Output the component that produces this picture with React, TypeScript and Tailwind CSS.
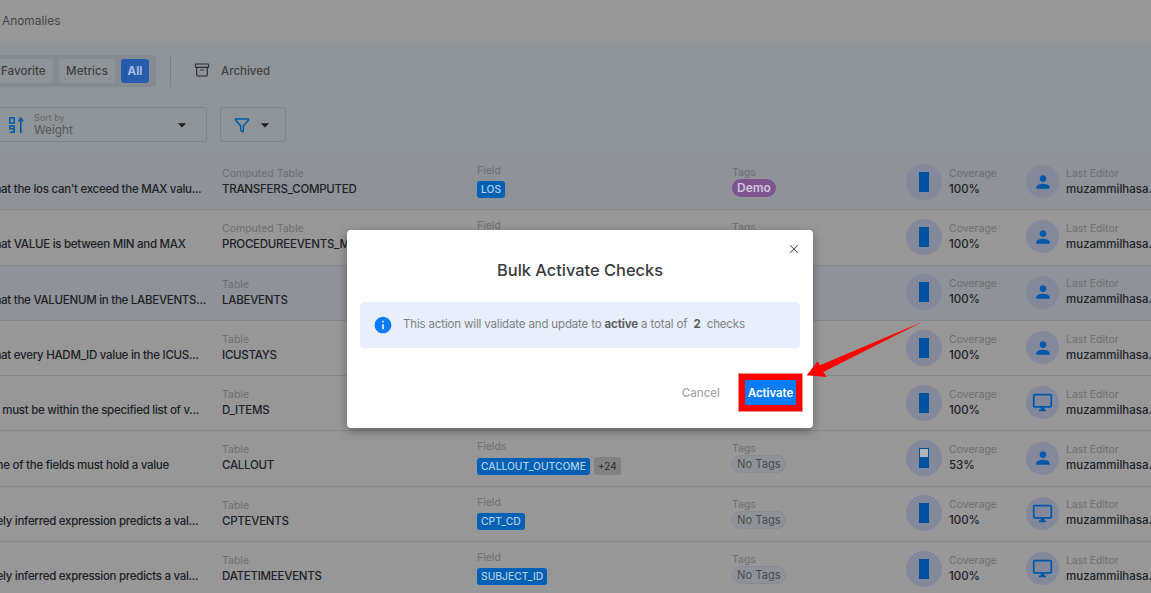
import { Archive, Funnel, X } from 'lucide-react';
import { MdPerson, MdOutlineDesktopWindows, MdInfo, MdArrowDropDown } from 'react-icons/md';

const FONT = "font-['Inter','Noto_Sans',sans-serif]";

type Row = {
  desc: string;
  tableType: string;
  table: string;
  fieldLabel: string;
  field: string;
  extra?: string;
  tag?: string;
  coverage: number;
  editor: 'user' | 'system';
  selected?: boolean;
};

const ROWS: Row[] = [
  { desc: "Asserts that the los can't exceed the MAX valu...", tableType: 'Computed Table', table: 'TRANSFERS_COMPUTED', fieldLabel: 'Field', field: 'LOS', tag: 'Demo', coverage: 100, editor: 'user', selected: true },
  { desc: 'Asserts that VALUE is between MIN and MAX', tableType: 'Computed Table', table: 'PROCEDUREEVENTS_MV', fieldLabel: 'Field', field: 'VALUE', coverage: 100, editor: 'user' },
  { desc: 'Asserts that the VALUENUM in the LABEVENTS...', tableType: 'Table', table: 'LABEVENTS', fieldLabel: 'Field', field: 'VALUENUM', coverage: 100, editor: 'user', selected: true },
  { desc: 'Asserts that every HADM_ID value in the ICUS...', tableType: 'Table', table: 'ICUSTAYS', fieldLabel: 'Field', field: 'HADM_ID', coverage: 100, editor: 'user' },
  { desc: 'The value must be within the specified list of v...', tableType: 'Table', table: 'D_ITEMS', fieldLabel: 'Field', field: 'CATEGORY', coverage: 100, editor: 'system' },
  { desc: 'At least one of the fields must hold a value', tableType: 'Table', table: 'CALLOUT', fieldLabel: 'Fields', field: 'CALLOUT_OUTCOME', extra: '+24', coverage: 53, editor: 'user' },
  { desc: 'Immediately inferred expression predicts a val...', tableType: 'Table', table: 'CPTEVENTS', fieldLabel: 'Field', field: 'CPT_CD', coverage: 100, editor: 'system' },
  { desc: 'Immediately inferred expression predicts a val...', tableType: 'Table', table: 'DATETIMEEVENTS', fieldLabel: 'Field', field: 'SUBJECT_ID', coverage: 100, editor: 'system' },
];

function Label({ children }: { children: string }) {
  return <div className="text-[10.5px] leading-[14px] text-[#6e7074]">{children}</div>;
}

function Value({ children }: { children: string }) {
  return <div className="text-[11.5px] leading-[16px] font-medium text-[#202226] whitespace-nowrap">{children}</div>;
}

function CheckRow({ row }: { row: Row }) {
  return (
    <div className={`h-[55.3px] grid grid-cols-[222px_255px_255px_174px_120px_1fr] border-b border-[#858789] overflow-hidden ${row.selected ? 'bg-[#8f9298]' : 'bg-[#979797]'}`}>
      <div className="overflow-hidden pt-[26px]">
        <div className="ml-[-52px] text-[11.5px] leading-[16px] font-medium tracking-[-0.27px] text-[#202226] whitespace-nowrap">{row.desc}</div>
      </div>
      <div className="pt-[12px]">
        <Label>{row.tableType}</Label>
        <div className="tracking-[-0.25px]"><Value>{row.table}</Value></div>
      </div>
      <div className="pt-[9px]">
        <Label>{row.fieldLabel}</Label>
        <div className="mt-[3px] flex items-center gap-1">
          <span className="h-[17px] px-[4px] rounded-[3px] bg-[#0060b4] text-[#b5cfe8] text-[10.3px] leading-[17px] font-medium">{row.field}</span>
          {row.extra && <span className="h-[18px] px-[4px] rounded-[3px] bg-[#808284] text-[#2d2f33] text-[10px] leading-[18px]">{row.extra}</span>}
        </div>
      </div>
      <div className="pt-[11px]">
        <Label>Tags</Label>
        {row.tag ? (
          <div className="w-fit -mt-[1px] h-[18px] px-[5px] rounded-full bg-[#7d5490] text-[#d2c4da] text-[12px] leading-[18px] font-semibold">{row.tag}</div>
        ) : (
          <div className="w-fit -mt-[1px] h-[18px] px-[4px] rounded-full bg-[#8f9298] border border-[#898c92] text-[#4a4c50] text-[11.2px] leading-[16px]">No Tags</div>
        )}
      </div>
      <div className="flex items-center gap-[7px] -mt-[1px]">
        <div className="w-9 h-9 rounded-full bg-[#83899a] flex items-center justify-center">
          <div className="w-[10px] h-5 bg-[#00529f] p-[1px]">
            {row.coverage < 100 && <div className="w-2 h-2 bg-[#b3b5b9]" />}
          </div>
        </div>
        <div>
          <Label>Coverage</Label>
          <Value>{`${row.coverage}%`}</Value>
        </div>
      </div>
      <div className="flex items-center gap-[7px] -mt-[1px] overflow-hidden">
        <div className="w-[33px] h-[33px] shrink-0 rounded-full bg-[#83899a] flex items-center justify-center text-[#0058a8]">
          {row.editor === 'user' ? <MdPerson size={20} /> : <MdOutlineDesktopWindows size={21} />}
        </div>
        <div>
          <Label>Last Editor</Label>
          <Value>muzammilhasa...</Value>
        </div>
      </div>
    </div>
  );
}

export default function App() {
  return (
    <div className={`relative w-[1151px] h-[593px] overflow-hidden bg-[#979797] ${FONT}`}>
      <div className="h-[41px] flex items-center pl-[2px] text-[11.9px] text-[#45474b]">Anomalies</div>

      <div className="h-[114px] bg-[#8f9498] border-b border-[#8c9094]">
        <div className="flex items-center pt-[14px] h-[46px]">
          <div className="w-[156px] h-8 rounded-r-[3px] bg-[#868b91] flex items-center justify-end gap-[6px] pr-[7px]">
            <span className="h-6 w-[53px] rounded-r-[3px] bg-[#8f9499] text-[11.6px] leading-6 font-medium text-[#3f4145] whitespace-nowrap pl-[1px]">Favorite</span>
            <span className="h-6 w-[56px] rounded-[3px] bg-[#8f9499] text-[11.6px] leading-6 font-medium text-[#3f4145] text-center">Metrics</span>
            <span className="h-6 w-[28px] rounded-[3px] bg-[#265cac] text-[11.5px] leading-6 font-bold text-[#a8bedd] text-center">All</span>
          </div>
          <div className="w-px h-8 ml-[14px] bg-[#7c8186]" />
          <Archive size={16} strokeWidth={1.7} className="ml-[23px] -mt-[2px] text-[#2a2c30]" />
          <span className="ml-[11px] mt-[1px] text-[11.5px] font-medium text-[#3f4145]">Archived</span>
        </div>
        <div className="flex items-start mt-[20px]">
          <div className="w-[207px] h-[35px] rounded-r-[3px] border border-l-0 border-[#7f8388] flex items-center pl-[9px] pr-[14px]">
            <svg width="15" height="16" viewBox="0 0 15 16" fill="none" className="text-[#0058a8]">
              <rect x="0.8" y="0.8" width="4.4" height="5.2" stroke="currentColor" strokeWidth="1.5" />
              <rect x="0.8" y="9" width="4.4" height="2.8" stroke="currentColor" strokeWidth="1.5" />
              <path d="M5.2 11.5v3.7H0.8" stroke="currentColor" strokeWidth="1.5" />
              <path d="M11.8 16V1.5M9.4 4.4L11.8 1l2.4 3.4" stroke="currentColor" strokeWidth="1.6" />
            </svg>
            <div className="ml-[10px] flex-1">
              <div className="text-[9px] leading-[11px] text-[#65676b]">Sort by</div>
              <div className="text-[11.8px] leading-[15px] text-[#55575b]">Weight</div>
            </div>
            <MdArrowDropDown size={20} className="text-[#1c1e22]" />
          </div>
          <div className="ml-[13px] w-[66px] h-[35px] rounded-[3px] border border-[#7f8388] flex items-center pl-[13px] gap-[5px]">
            <Funnel size={16} strokeWidth={2.2} className="text-[#0058a8]" />
            <MdArrowDropDown size={20} className="text-[#1c1e22]" />
          </div>
        </div>
      </div>

      {ROWS.map((row, i) => (
        <CheckRow key={i} row={row} />
      ))}

      {/* dialog over the dimmed page */}
      <div className="absolute left-[347px] top-[230px] w-[466px] h-[198px] rounded-[4px] bg-white shadow-[0_3px_10px_rgba(0,0,0,0.35)] px-[13px]">
        <X size={14} strokeWidth={1.8} className="absolute right-[12px] top-[12px] text-[#4b4d52]" />
        <h2 className="pt-[29px] text-center text-[16.4px] leading-[22px] font-medium text-[#3a3c40]">Bulk Activate Checks</h2>
        <div className="mt-[21px] h-[46px] rounded-[4px] bg-[#e8effb] flex items-center pl-[13px] text-[11.5px] tracking-[-0.15px] text-[#7b7f86] whitespace-pre">
          <MdInfo size={20} className="text-[#0a7cf6] mr-[10px]" />
          <span>This action will validate and update to <b className="font-bold text-[#5b5e64]">active</b> a total of  <b className="font-bold text-[#5b5e64]">2</b>  checks</span>
        </div>
        <div className="mt-[26px] flex items-center justify-end">
          <span className="mt-[2px] text-[11.5px] font-medium text-[#a3a5a8] mr-[19px]">Cancel</span>
          <div className="border-[6px] border-[#f00] outline outline-1 outline-[#f28a8a] -mr-[2px]">
            <div className="w-[51px] h-[25px] bg-[#0a7cf6] text-white text-[11.3px] leading-[26px] font-semibold text-center">Activate</div>
          </div>
        </div>
      </div>

      {/* annotation arrow */}
      <svg className="absolute left-[800px] top-[315px]" width="130" height="70" viewBox="0 0 130 70">
        <polygon points="122,7 23.3,57 26.7,62 6.7,60.3 17.7,46.3 20,50.3" fill="#f00" />
      </svg>
    </div>
  );
}
